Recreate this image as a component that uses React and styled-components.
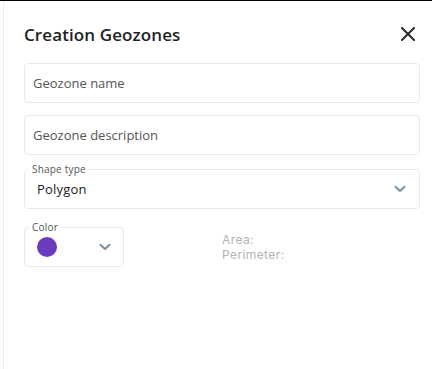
import React from "react";
import styled, { createGlobalStyle } from "styled-components";

const GlobalStyle = createGlobalStyle`
  html, body { margin: 0; padding: 0; background: #fff; }
  body { font-family: "Open Sans", "Liberation Sans", sans-serif; }
  * { box-sizing: border-box; }
`;

const Page = styled.div`
  border-top: 1px solid #000;
  padding-left: 3px;
  height: 369px;
  overflow: hidden;
`;

const Panel = styled.div`
  border-left: 1px solid #ececec;
  height: 368px;
  padding: 15px 12px 0 20px;
  display: flex;
  flex-direction: column;
`;

const Header = styled.div`
  display: flex;
  align-items: center;
  justify-content: space-between;
  height: 36px;
  margin-bottom: 11px;
`;

const Title = styled.h2`
  margin: 0;
  font-size: 17px;
  font-weight: 600;
  color: #1f1f1f;
  letter-spacing: 0.1px;
`;

const CloseButton = styled.button`
  border: none;
  background: none;
  padding: 0;
  margin-right: 5px;
  width: 14px;
  height: 14px;
  display: flex;
  cursor: pointer;
`;

const TextField = styled.div`
  height: 40px;
  border: 1px solid #e8e9ee;
  border-radius: 4px;
  display: flex;
  align-items: center;
  padding-left: 8px;
  margin-bottom: ${(p) => p.$mb || 0}px;
  font-size: 13px;
  color: #555;
`;

const Outlined = styled.div`
  position: relative;
  height: 40px;
  width: ${(p) => p.$w || "auto"};
  border: 1px solid #e8e9ee;
  border-radius: 4px;
  display: flex;
  align-items: center;
  justify-content: space-between;
  padding: 0 ${(p) => p.$pr || 13}px 0 ${(p) => p.$pl || 12}px;
  margin-bottom: ${(p) => p.$mb || 0}px;
  flex-shrink: 0;
`;

const Legend = styled.span`
  position: absolute;
  left: 4px;
  top: -7px;
  background: #fff;
  padding: 0 3px;
  font-size: 10px;
  line-height: 12px;
  color: #555;
  letter-spacing: 0.2px;
`;

const Value = styled.span`
  font-size: 13px;
  color: #222;
  letter-spacing: 0.2px;
`;

const Row = styled.div`
  display: flex;
  align-items: flex-start;
`;

const Swatch = styled.span`
  width: 20px;
  height: 20px;
  border-radius: 50%;
  background: ${(p) => p.$color};
`;

const Stats = styled.div`
  margin-left: 98px;
  margin-top: 5px;
  display: flex;
  flex-direction: column;
  font-family: Inter, "Open Sans", sans-serif;
  font-size: 12px;
  line-height: 15px;
  color: #b3b3b3;
  letter-spacing: 0.4px;
`;

const Chevron = () => (
  <svg width="12" height="8" viewBox="0 0 12 8">
    <path d="M1.5 1.8 L6 6 L10.5 1.8" fill="none" stroke="#78909c" strokeWidth="2" strokeLinecap="round" strokeLinejoin="round" />
  </svg>
);

export default function App() {
  return (
    <>
      <GlobalStyle />
      <Page>
        <Panel>
          <Header>
            <Title>Creation Geozones</Title>
            <CloseButton aria-label="close">
              <svg width="14" height="14" viewBox="0 0 14 14">
                <path d="M1 1 L13 13 M13 1 L1 13" stroke="#2b2b2b" strokeWidth="2" strokeLinecap="square" />
              </svg>
            </CloseButton>
          </Header>
          <TextField $mb={12}>Geozone name</TextField>
          <TextField $mb={14}>Geozone description</TextField>
          <Outlined $mb={18}>
            <Legend>Shape type</Legend>
            <Value>Polygon</Value>
            <Chevron />
          </Outlined>
          <Row>
            <Outlined $w="100px" $pl={12} $pr={12}>
              <Legend>Color</Legend>
              <Swatch $color="#6b3bbd" />
              <Chevron />
            </Outlined>
            <Stats>
              <span>Area:</span>
              <span>Perimeter:</span>
            </Stats>
          </Row>
        </Panel>
      </Page>
    </>
  );
}
